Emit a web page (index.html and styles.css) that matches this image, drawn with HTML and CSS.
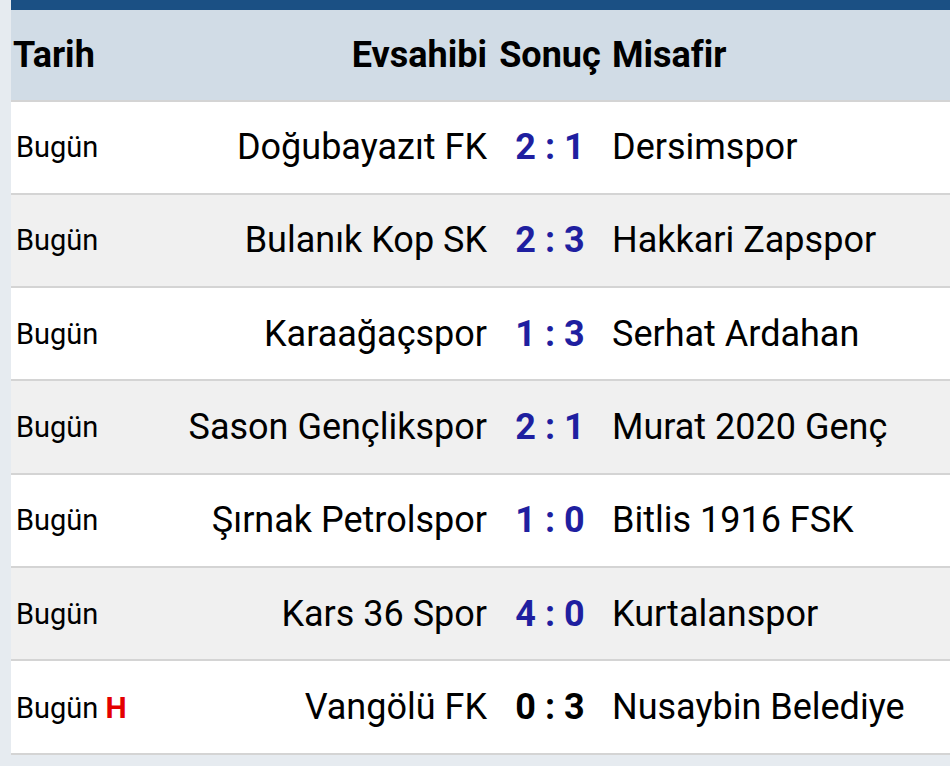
FILE: index.html
```html
<!DOCTYPE html>
<html lang="tr">
<head>
<meta charset="utf-8">
<title>Maçlar</title>
<link rel="stylesheet" href="styles.css">
</head>
<body>
<div class="page">
  <div class="board">
    <div class="topbar"></div>
    <div class="row head">
      <div class="c-date">Tarih</div>
      <div class="c-home">Evsahibi</div>
      <div class="c-score">Sonuç</div>
      <div class="c-away">Misafir</div>
    </div>
    <div class="row">
      <div class="c-date">Bugün</div>
      <div class="c-home">Doğubayazıt FK</div>
      <div class="c-score played">2 : 1</div>
      <div class="c-away">Dersimspor</div>
    </div>
    <div class="row alt">
      <div class="c-date">Bugün</div>
      <div class="c-home">Bulanık Kop SK</div>
      <div class="c-score played">2 : 3</div>
      <div class="c-away">Hakkari Zapspor</div>
    </div>
    <div class="row">
      <div class="c-date">Bugün</div>
      <div class="c-home">Karaağaçspor</div>
      <div class="c-score played">1 : 3</div>
      <div class="c-away">Serhat Ardahan</div>
    </div>
    <div class="row alt">
      <div class="c-date">Bugün</div>
      <div class="c-home">Sason Gençlikspor</div>
      <div class="c-score played">2 : 1</div>
      <div class="c-away">Murat 2020 Genç</div>
    </div>
    <div class="row">
      <div class="c-date">Bugün</div>
      <div class="c-home">Şırnak Petrolspor</div>
      <div class="c-score played">1 : 0</div>
      <div class="c-away">Bitlis 1916 FSK</div>
    </div>
    <div class="row alt">
      <div class="c-date">Bugün</div>
      <div class="c-home">Kars 36 Spor</div>
      <div class="c-score played">4 : 0</div>
      <div class="c-away">Kurtalanspor</div>
    </div>
    <div class="row">
      <div class="c-date">Bugün <span class="forfeit">H</span></div>
      <div class="c-home">Vangölü FK</div>
      <div class="c-score">0 : 3</div>
      <div class="c-away">Nusaybin Belediye</div>
    </div>
  </div>
</div>
</body>
</html>
```

FILE: styles.css
```css
html, body {
  margin: 0;
  padding: 0;
  background: #e6ebf0;
  overflow: hidden;
}
body {
  font-family: Roboto, "Noto Sans", sans-serif;
  color: #000;
}
.page {
  padding-left: 11px;
  height: 766px;
}
.board {
  background: #ffffff;
}
.topbar {
  height: 10px;
  background: #1b5084;
}
.row {
  display: grid;
  grid-template-columns: 150px 333px 112px 1fr;
  align-items: center;
  height: 91.33px;
  border-bottom: 2px solid #d4d4d4;
  font-size: 36px;
  white-space: nowrap;
}
.row.alt {
  background: #f0f0f0;
}
.row.head {
  height: 89.5px;
  background: #d1dce6;
  font-weight: 700;
}
.c-date {
  padding-left: 5px;
  font-size: 29px;
}
.head .c-date {
  padding-left: 2px;
  font-size: 36px;
}
.c-home {
  text-align: right;
  padding-right: 7px;
}
.c-score {
  text-align: center;
  font-weight: 700;
}
.c-score.played {
  color: #1f1fa0;
}
.c-away {
  padding-left: 6px;
}
.forfeit {
  color: #e40000;
  font-weight: 700;
  font-size: 30px;
}
```
